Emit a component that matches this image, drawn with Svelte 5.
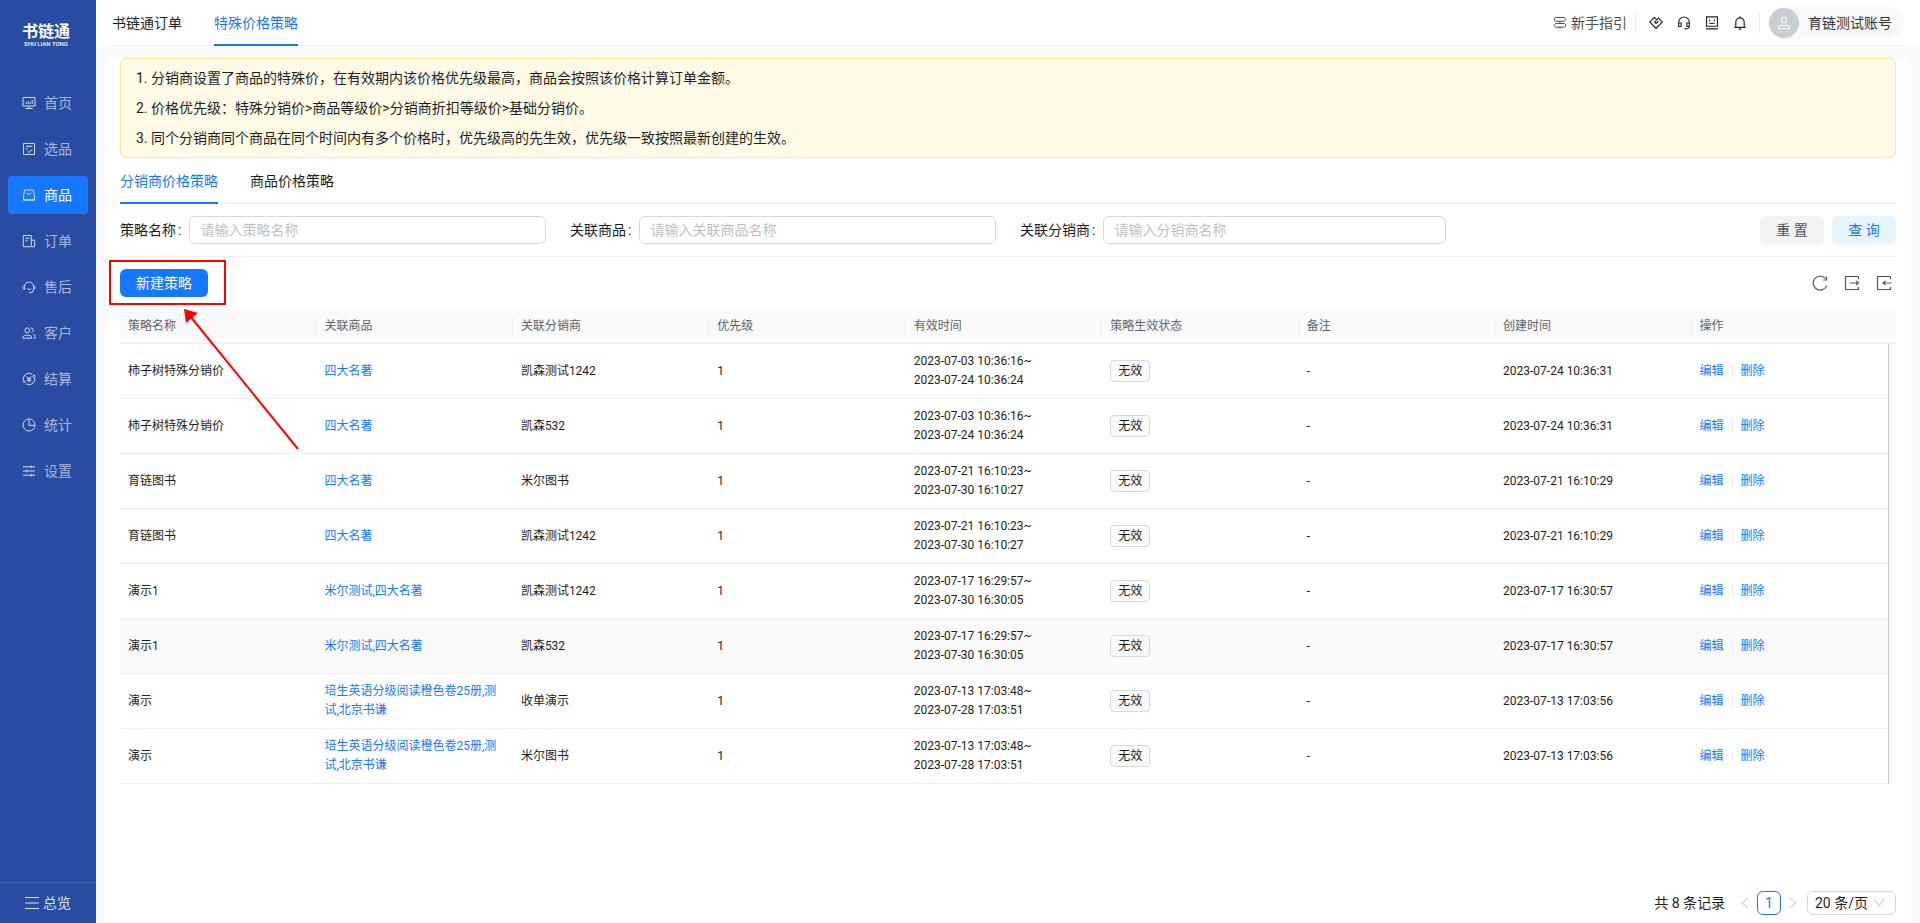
<script>
  const menus = [
    { name: "首页", icon: "home" },
    { name: "选品", icon: "select" },
    { name: "商品", icon: "goods" },
    { name: "订单", icon: "order" },
    { name: "售后", icon: "service" },
    { name: "客户", icon: "customer" },
    { name: "结算", icon: "settle" },
    { name: "统计", icon: "stats" },
    { name: "设置", icon: "setting" },
  ];

  const columns = [
    "策略名称",
    "关联商品",
    "关联分销商",
    "优先级",
    "有效时间",
    "策略生效状态",
    "备注",
    "创建时间",
    "操作",
  ];

  const fields = [
    { id: "name", label: "策略名称", placeholder: "请输入策略名称" },
    { id: "goods", label: "关联商品", placeholder: "请输入关联商品名称" },
    { id: "dealer", label: "关联分销商", placeholder: "请输入分销商名称" },
  ];

  const rows = [
    { name: "柿子树特殊分销价", goods: "四大名著", dealer: "凯森测试1242", start: "2023-07-03 10:36:16", end: "2023-07-24 10:36:24", created: "2023-07-24 10:36:31" },
    { name: "柿子树特殊分销价", goods: "四大名著", dealer: "凯森532", start: "2023-07-03 10:36:16", end: "2023-07-24 10:36:24", created: "2023-07-24 10:36:31" },
    { name: "育链图书", goods: "四大名著", dealer: "米尔图书", start: "2023-07-21 16:10:23", end: "2023-07-30 16:10:27", created: "2023-07-21 16:10:29" },
    { name: "育链图书", goods: "四大名著", dealer: "凯森测试1242", start: "2023-07-21 16:10:23", end: "2023-07-30 16:10:27", created: "2023-07-21 16:10:29" },
    { name: "演示1", goods: "米尔测试,四大名著", dealer: "凯森测试1242", start: "2023-07-17 16:29:57", end: "2023-07-30 16:30:05", created: "2023-07-17 16:30:57" },
    { name: "演示1", goods: "米尔测试,四大名著", dealer: "凯森532", start: "2023-07-17 16:29:57", end: "2023-07-30 16:30:05", created: "2023-07-17 16:30:57" },
    { name: "演示", goods: "培生英语分级阅读橙色卷25册,测试,北京书谦", dealer: "收单演示", start: "2023-07-13 17:03:48", end: "2023-07-28 17:03:51", created: "2023-07-13 17:03:56" },
    { name: "演示", goods: "培生英语分级阅读橙色卷25册,测试,北京书谦", dealer: "米尔图书", start: "2023-07-13 17:03:48", end: "2023-07-28 17:03:51", created: "2023-07-13 17:03:56" },
  ];

  let activeMenu = $state("商品");
  let activeRow = $state(5);
  let activeTab = $state("分销商价格策略");
</script>

<div class="layout">
  <aside class="sidebar">
    <div class="logo">
      <span class="logo-name">书链通</span>
      <span class="logo-sub">SHU LIAN TONG</span>
    </div>
    <nav class="menu">
      {#each menus as menu}
        <a
          href="#{menu.icon}"
          class="menu-item"
          class:active={menu.name === activeMenu}
          onclick={() => (activeMenu = menu.name)}
        >
          <svg class="icon" viewBox="0 0 14 14" aria-hidden="true">
            {#if menu.icon === "home"}
              <path d="M1 1.5h12v8.5H1zM7 10v2.5M3.5 12.5h7M4.2 8V6M6.2 8V5M8.2 8V6M10.2 8V3.8" />
            {:else if menu.icon === "select"}
              <path d="M1.5 1.5h11v11h-11zM3.8 4.3h6.4M3.8 6.8h2M5.5 9l1.7 1.6 3.3-3.6" />
            {:else if menu.icon === "goods"}
              <path d="M2.5 2h9l1 7v3.2h-11V9zM1.5 11.7h11M4.6 4.8L7 6.6l2.4-1.8" />
            {:else if menu.icon === "order"}
              <path d="M1.3 1.5h8v11.2h-8zM9.3 6.2h3.4v6.5H9.3M3.3 4.3h4M3.3 6.8h2.2" />
            {:else if menu.icon === "service"}
              <path d="M2.5 9.3V6.5a4.5 4.5 0 0 1 9 0v3a3.3 3.3 0 0 1-3.3 3.3H7M2.5 5.5C.3 5.8.3 9 2.5 9.3M11.5 5.5c2.2.3 2.2 3.5 0 3.8M5 8.3c.8 1.6 3.2 1.6 4 0" />
            {:else if menu.icon === "customer"}
              <circle cx="5.3" cy="4.3" r="2.4" />
              <path d="M1 12.2v-1.4c0-2.2 8.6-2.2 8.6 0v1.4zM8.6 2.1c3-.6 3.8 3.4 1.2 4.1M11 8.6c1.4.2 2.2.9 2.2 2v1.6h-1.8" />
            {:else if menu.icon === "settle"}
              <path d="M2.2 10A5.6 5.6 0 0 1 9.8 2.1M11.8 4a5.6 5.6 0 0 1-7.6 7.9M.8 9.3l1.5 1.5 1.5-1.5M10.2 4.3l1.6-1.4 1.6 1.4M4.9 4.4L7 6.6l2.1-2.2M4.8 6.8h4.4M4.8 8.6h4.4M7 6.6v3.6" />
            {:else if menu.icon === "stats"}
              <circle cx="7" cy="7" r="6" />
              <path d="M7 1v6.3h6" />
            {:else}
              <path d="M1 2.8h12M1 7h12M1 11.2h12M9 1.3v3M4.7 5.5v3M9.3 9.7v3" />
            {/if}
          </svg>
          <span>{menu.name}</span>
        </a>
      {/each}
    </nav>
    <a href="#overview" class="overview">
      <svg class="icon" viewBox="0 0 14 14" aria-hidden="true">
        <path d="M0 1.5h14M0 7h14M0 12.5h14" />
      </svg>
      <span>总览</span>
    </a>
  </aside>

  <div class="main">
    <header class="header">
      <nav class="tabs">
        <a href="#order-tab" class="tab">书链通订单</a>
        <a href="#price-tab" class="tab active">特殊价格策略</a>
      </nav>
      <div class="header-right">
        <a href="#guide" class="guide">
          <svg class="guide-icon" viewBox="0 0 14 14" aria-hidden="true">
            <path d="M2.5 1.5h8.8l1.5 1.9-1.5 1.9H2.5L1.5 4.5v-2zM11.5 7.5H2.7L1.2 9.3l1.5 1.9h8.8l1-.8V8.3zM7 5.3v2.2M7 11.2V13" />
          </svg>
          新手指引
        </a>
        <span class="divider"></span>
        <div class="actions">
          <button type="button" aria-label="合作">
            <svg viewBox="0 0 16 16">
              <path d="M8.4 3.4L6 1.8.9 6.8 8 14.2l7.1-7.4-4-4.4L6.4 6.8l1.7 1.8 2.8-2.6" />
            </svg>
          </button>
          <button type="button" aria-label="客服">
            <svg viewBox="0 0 16 16">
              <path d="M1.9 9V7.3a6.1 6.1 0 0 1 12.2 0V11c0 2.2-1.3 3.7-3.6 3.7H8.5M1.9 8h2.8v4H1.9zM11.3 8h2.8v4h-2.8z" />
            </svg>
          </button>
          <button type="button" aria-label="反馈">
            <svg viewBox="0 0 16 16">
              <path d="M1.7 1h12.6v10.7H1.7zM1.2 14.7h13.6M5.3 4v2M10.7 4v2M5 8.6h6" />
            </svg>
          </button>
          <button type="button" aria-label="消息">
            <svg viewBox="0 0 16 16">
              <path d="M3.2 13V7a4.8 4.8 0 0 1 9.6 0v6M1.5 13h13M8 .4v1.8M6.5 15h3" />
            </svg>
          </button>
        </div>
        <span class="divider"></span>
        <a href="#user" class="user">
          <span class="avatar">
            <svg viewBox="0 0 14 14" aria-hidden="true">
              <circle cx="7" cy="3.8" r="2.7" />
              <path d="M1.5 12.6v-1c0-3 11-3 11 0v1z" />
            </svg>
          </span>
          育链测试账号
        </a>
      </div>
    </header>

    <main class="panel">
      <div class="notice">
        <p>1. 分销商设置了商品的特殊价，在有效期内该价格优先级最高，商品会按照该价格计算订单金额。</p>
        <p>2. 价格优先级：特殊分销价&gt;商品等级价&gt;分销商折扣等级价&gt;基础分销价。</p>
        <p>3. 同个分销商同个商品在同个时间内有多个价格时，优先级高的先生效，优先级一致按照最新创建的生效。</p>
      </div>

      <div class="tabs sub-tabs">
        {#each ["分销商价格策略", "商品价格策略"] as tab}
          <button type="button" class="tab" class:active={tab === activeTab} onclick={() => (activeTab = tab)}>
            {tab}
          </button>
        {/each}
      </div>

      <form class="search">
        {#each fields as field}
          <div class="field">
            <label for={field.id}>{field.label}<span class="colon">:</span></label>
            <input id={field.id} type="text" placeholder={field.placeholder} />
          </div>
        {/each}
        <div class="search-btns">
          <button type="reset" class="btn btn-reset">重 置</button>
          <button type="button" class="btn btn-query">查 询</button>
        </div>
      </form>

      <div class="toolbar">
        <button type="button" class="btn btn-primary">新建策略</button>
        <div class="tools">
          <button type="button" aria-label="刷新">
            <svg viewBox="0 0 16 16">
              <path d="M14.8 10.4A7 7 0 1 1 13.6 3.6M14.6 1.6v3.4h-3.4" />
            </svg>
          </button>
          <button type="button" aria-label="导出">
            <svg viewBox="0 0 16 16">
              <path d="M14.5 4V1.5h-13v13h13V12M6 8h8.5M12 6l2.5 2L12 10" />
            </svg>
          </button>
          <button type="button" aria-label="导入">
            <svg viewBox="0 0 16 16">
              <path d="M14.5 4V1.5h-13v13h13V12M7 8h8.5M9.5 6L7 8l2.5 2" />
            </svg>
          </button>
        </div>
        <svg class="mark" viewBox="0 0 200 200" aria-hidden="true">
          <rect x="2" y="2" width="115" height="43" />
          <path d="M190 190L82 57" />
          <polygon points="76,50 90,54 78,64" />
        </svg>
      </div>

      <table>
        <thead>
          <tr>
            {#each columns as column}
              <th><span>{column}</span></th>
            {/each}
            <td class="gutter"></td>
          </tr>
        </thead>
        <tbody>
          {#each rows as row, i}
            <tr class:hover={i === activeRow} onmouseenter={() => (activeRow = i)}>
              <td>{row.name}</td>
              <td><a href="#goods-{i}">{row.goods}</a></td>
              <td>{row.dealer}</td>
              <td>1</td>
              <td>{row.start}~<br />{row.end}</td>
              <td><span class="tag">无效</span></td>
              <td>-</td>
              <td>{row.created}</td>
              <td>
                <div class="ops">
                  <a href="#edit-{i}">编辑</a>
                  <i></i>
                  <a href="#delete-{i}">删除</a>
                </div>
              </td>
              <td class="gutter"></td>
            </tr>
          {/each}
        </tbody>
      </table>

      <footer class="pagination">
        <span class="total">共 8 条记录</span>
        <div class="pages">
          <button type="button" class="arrow" aria-label="上一页" disabled>
            <svg viewBox="0 0 12 12"><path d="M9 1L3 6l6 5" /></svg>
          </button>
          <button type="button" class="page">1</button>
          <button type="button" class="arrow" aria-label="下一页" disabled>
            <svg viewBox="0 0 12 12"><path d="M3 1l6 5-6 5" /></svg>
          </button>
        </div>
        <div class="size">
          <select aria-label="每页条数">
            <option>20 条/页</option>
          </select>
          <svg viewBox="0 0 12 12" aria-hidden="true"><path d="M1 2l5 7 5-7" /></svg>
        </div>
      </footer>
    </main>
  </div>
</div>

<style>
  :global(body) {
    background: #fafafa;
    color: #1d1d1d;
    font-family: Roboto, "Noto Sans CJK SC", sans-serif;
    font-size: 14px;
    line-height: 22px;
  }

  a {
    color: #1677ff;
    text-decoration: none;
  }

  button,
  input,
  select {
    box-sizing: border-box;
    margin: 0;
    font: inherit;
  }

  button {
    padding: 0;
    border: 0;
    background: none;
    color: inherit;
    cursor: pointer;
  }

  svg {
    display: block;
    fill: none;
    stroke: currentColor;
  }

  .layout {
    display: flex;
    min-height: 100vh;
  }

  /* sidebar */
  .sidebar {
    display: flex;
    flex-direction: column;
    flex: none;
    width: 96px;
    background: #294ca3;
  }

  .logo {
    display: flex;
    flex-direction: column;
    align-items: center;
    padding: 22px 4px 0 0;
    height: 62px;
    color: #fff;
  }

  .logo-name {
    font-size: 16px;
    font-weight: 700;
    line-height: 19px;
  }

  .logo-sub {
    font-size: 6px;
    font-weight: 500;
    line-height: 6px;
  }

  .menu {
    display: flex;
    flex-direction: column;
    flex: 1;
    gap: 8px;
    padding: 0 8px;
  }

  .menu-item {
    display: flex;
    align-items: center;
    gap: 8px;
    padding-left: 14px;
    height: 38px;
    border-radius: 4px;
    color: #a9b7da;
  }

  .menu-item.active {
    background: #1677ff;
    color: #fff;
  }

  .icon {
    width: 14px;
    height: 14px;
  }

  .menu .icon {
    color: #d4dbed;
  }

  .overview {
    display: flex;
    align-items: center;
    gap: 4px;
    padding-left: 25px;
    height: 40px;
    border-top: 1px solid #3f62b0;
    color: #dfe4f1;
  }

  /* header */
  .main {
    display: flex;
    flex-direction: column;
    flex: 1;
    min-width: 0;
  }

  .header {
    display: flex;
    justify-content: space-between;
    padding: 0 16px;
    background: #fff;
  }

  .tabs {
    display: flex;
    flex: 1;
    gap: 32px;
    height: 45px;
    border-bottom: 1px solid #f0f0f0;
  }

  .tab {
    display: flex;
    align-items: center;
    height: 46px;
    color: #1d1d1d;
  }

  .tab.active {
    color: #1677ff;
    box-shadow: inset 0 -2px #1677ff;
  }

  .header-right {
    display: flex;
    align-items: center;
    height: 45px;
    border-bottom: 1px solid #f0f0f0;
  }

  .guide {
    display: flex;
    align-items: center;
    gap: 4px;
    color: #4e4e4e;
  }

  .guide-icon {
    width: 14px;
    height: 14px;
  }

  .divider {
    width: 1px;
    height: 20px;
    margin: 0 8px;
    background: #ebebeb;
  }

  .actions {
    display: flex;
    gap: 14px;
    padding: 0 4px 0 5px;
    color: #222;
  }

  .actions svg {
    width: 14px;
    height: 14px;
    stroke-width: 1.3;
  }

  .user {
    display: flex;
    align-items: center;
    gap: 9px;
    padding: 1px 12px 1px 1px;
    border-radius: 16px;
    background: #f7f8fa;
    color: #333;
  }

  .avatar {
    display: flex;
    align-items: center;
    justify-content: center;
    width: 30px;
    height: 30px;
    border-radius: 50%;
    background: #c9cdd4;
    color: #f2f3f5;
  }

  .avatar svg {
    width: 14px;
    height: 14px;
    stroke-width: 1.3;
  }

  /* content */
  .panel {
    display: flex;
    flex-direction: column;
    flex: 1;
    margin: 12px 12px 0;
    padding: 0 12px 8px;
    background: #fff;
  }

  .notice {
    padding: 4px 15px;
    border: 1px solid #ffe58f;
    border-radius: 6px;
    background: #fffbe6;
  }

  .notice p {
    margin: 0;
    line-height: 30px;
  }

  .sub-tabs {
    flex: none;
  }

  .search {
    display: grid;
    grid-template-columns: repeat(4, 1fr);
    gap: 24px;
    padding: 12px 0;
    border-bottom: 1px solid #f0f0f0;
  }

  .field {
    display: flex;
    align-items: center;
  }

  .colon {
    margin: 0 8px 0 2px;
  }

  .field input {
    flex: 1;
    min-width: 0;
    height: 28px;
    padding: 0 10px;
    border: 1px solid #d9d9d9;
    border-radius: 6px;
    outline: none;
  }

  .field input::placeholder {
    color: #bfbfbf;
  }

  .search-btns {
    display: flex;
    justify-content: flex-end;
    gap: 8px;
  }

  .btn {
    min-width: 64px;
    height: 28px;
    padding: 0 16px;
    border-radius: 6px;
    box-shadow: 0 2px 0 rgba(0, 0, 0, 0.02);
    white-space: nowrap;
  }

  .search-btns .btn {
    padding: 0;
  }

  .btn-reset {
    background: #f2f3f5;
    color: #4e5360;
  }

  .btn-query {
    background: #e6f4ff;
    color: #1677ff;
  }

  .btn-primary {
    background: #1677ff;
    color: #fff;
  }

  .toolbar {
    position: relative;
    display: flex;
    align-items: center;
    justify-content: space-between;
    padding: 12px 0;
  }

  .tools {
    display: flex;
    gap: 16px;
    padding-right: 4px;
    color: #5a5a5a;
  }

  .tools svg {
    width: 16px;
    height: 16px;
    stroke-width: 1.2;
  }

  .mark {
    position: absolute;
    top: 2px;
    left: -12px;
    width: 200px;
    height: 200px;
    stroke: #f00;
    stroke-width: 2;
    pointer-events: none;
  }

  .mark polygon {
    fill: #f00;
    stroke: none;
  }

  /* table */
  table {
    width: 100%;
    table-layout: fixed;
    border-collapse: separate;
    border-spacing: 0;
    font-size: 12px;
    line-height: 19px;
  }

  th {
    height: 34px;
    padding: 0;
    border-bottom: 1px solid #f0f0f0;
    background: #fafafa;
    color: #5c626b;
    font-weight: 400;
    text-align: left;
  }

  th:first-child {
    border-top-left-radius: 6px;
  }

  th span {
    display: block;
    padding: 0 8px;
    border-right: 1px solid #ebebeb;
  }

  th:nth-last-child(2) span {
    border-right: 0;
  }

  td {
    height: 38px;
    padding: 8px;
    border-bottom: 1px solid #f0f0f0;
  }

  .gutter {
    width: 8px;
    padding: 0;
  }

  thead .gutter {
    height: 34px;
    border-top-right-radius: 6px;
    background: #fafafa;
  }

  tbody .gutter {
    width: 7px;
    border-bottom: 0;
    border-left: 1px solid #c8c8c8;
    background: #fff;
  }

  .hover td:not(.gutter) {
    background: #fafafa;
  }

  .tag {
    display: inline-block;
    padding: 0 7px;
    border: 1px solid #d9d9d9;
    border-radius: 4px;
    background: #fafafa;
    line-height: 20px;
    vertical-align: middle;
  }

  .ops {
    display: flex;
    align-items: center;
    gap: 8px;
  }

  .ops i {
    width: 1px;
    height: 12px;
    background: #ebebeb;
  }

  /* pagination */
  .pagination {
    display: flex;
    align-items: center;
    justify-content: flex-end;
    gap: 2px;
    margin-top: auto;
    padding-top: 12px;
  }

  .total {
    margin-right: 6px;
  }

  .pages {
    display: flex;
    align-items: center;
  }

  .arrow {
    display: flex;
    align-items: center;
    justify-content: center;
    width: 24px;
    height: 24px;
    color: #bfbfbf;
  }

  .arrow svg,
  .size svg {
    width: 12px;
    height: 12px;
  }

  .page {
    width: 24px;
    height: 24px;
    border: 1px solid #1677ff;
    border-radius: 6px;
    color: #1677ff;
  }

  .size {
    position: relative;
  }

  .size select {
    width: 89px;
    height: 24px;
    padding: 0 7px;
    border: 1px solid #d9d9d9;
    border-radius: 6px;
    background: #fff;
    color: inherit;
    appearance: none;
  }

  .size svg {
    position: absolute;
    top: 6px;
    right: 11px;
    color: #bfbfbf;
    pointer-events: none;
  }
</style>
